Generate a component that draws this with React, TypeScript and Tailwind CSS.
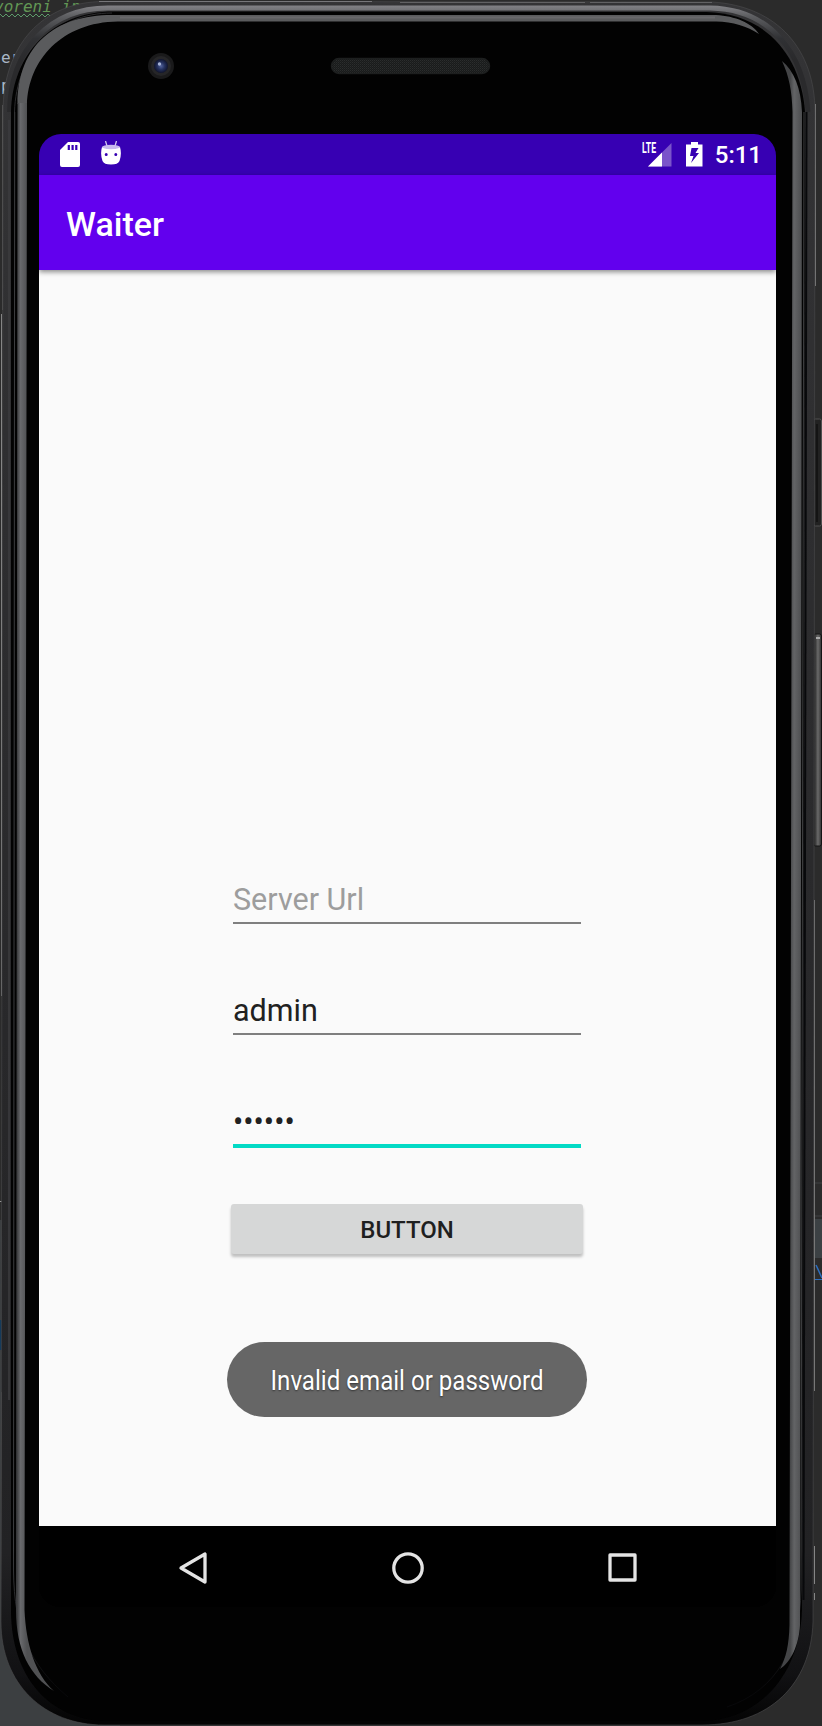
import React from "react";

const OUTER =
  "M3 112 C3 46 42 1.500 104 1.500 L712 2 C778 6 815 50 815 112 L813 1622 C811 1684 770 1725 702 1725 L104 1725 C44 1725 1 1684 1 1622 Z";

function EditorBackdrop() {
  return (
    <svg className="absolute inset-0" width="822" height="1726" viewBox="0 0 822 1726" fill="none" aria-hidden="true">
      <rect width="822" height="1726" fill="#2b2b2b" />
      <rect y="1220" width="120" height="506" fill="#3c3f41" />
      <rect y="1320" width="2" height="30" fill="#123a5c" />
      <rect x="814" y="1219" width="8" height="39" fill="#3c4144" />
      <path d="M814 1183H822M814 1216H822" stroke="#414345" />
      <path d="M0 1201.500H2" stroke="#999" />
      <path d="M2.500 105V310" stroke="#555" />
      <path d="M1.500 314V996M1.500 1392V1620" stroke="#858585" />
      <path d="M815.500 104V286" stroke="#7b7b7b" />
      <path d="M814.500 900V1391" stroke="#777" />
      <path d="M814.500 1546V1584M814.500 1593V1600" stroke="#858585" />
      <path d="M816 1265L822 1278" stroke="#2d6fc0" strokeWidth="1.500" />
      <path d="M815 1279.500H822" stroke="#2d6fc0" />
    </svg>
  );
}

function DeviceFrame() {
  return (
    <svg className="absolute inset-0" width="822" height="1726" viewBox="0 0 822 1726" fill="none" aria-hidden="true">
      <defs>
        <linearGradient id="silver" gradientUnits="userSpaceOnUse" x1="790" x2="802" y1="0" y2="0">
          <stop offset="0" stopColor="#444547" />
          <stop offset=".35" stopColor="#636466" />
          <stop offset="1" stopColor="#4c4d4f" />
        </linearGradient>
        <linearGradient id="leftRim" gradientUnits="userSpaceOnUse" x1="17" x2="27" y1="0" y2="0">
          <stop offset="0" stopColor="#3b3c3e" />
          <stop offset=".35" stopColor="#68696c" />
          <stop offset="1" stopColor="#505153" />
        </linearGradient>
        <linearGradient id="topRim" gradientUnits="userSpaceOnUse" x1="0" x2="0" y1="6" y2="60">
          <stop offset="0" stopColor="#808084" />
          <stop offset=".2" stopColor="#5c5d60" />
          <stop offset=".6" stopColor="#303134" />
          <stop offset="1" stopColor="#2a2a2c" />
        </linearGradient>
        <linearGradient id="body" gradientUnits="userSpaceOnUse" x1="0" x2="0" y1="0" y2="1726">
          <stop offset="0" stopColor="#343436" />
          <stop offset=".9" stopColor="#222224" />
          <stop offset=".97" stopColor="#111113" />
          <stop offset="1" stopColor="#030303" />
        </linearGradient>
        <linearGradient id="line" gradientUnits="userSpaceOnUse" x1="0" x2="0" y1="1550" y2="1690">
          <stop offset="0" stopColor="#3c3d3f" />
          <stop offset="1" stopColor="#08080a" />
        </linearGradient>
        <linearGradient id="key" x1="0" x2="1" y1="0" y2="0">
          <stop offset="0" stopColor="#151515" />
          <stop offset=".55" stopColor="#6a6a6a" />
          <stop offset="1" stopColor="#303030" />
        </linearGradient>
        <radialGradient id="lens">
          <stop offset="0" stopColor="#53639c" />
          <stop offset=".5" stopColor="#253260" />
          <stop offset="1" stopColor="#10142c" />
        </radialGradient>
        <pattern id="mesh" width="2" height="2" patternUnits="userSpaceOnUse">
          <rect width="2" height="2" fill="#191b1b" />
          <rect width="1" height="1" fill="#2b2d2d" />
          <rect x="1" y="1" width="1" height="1" fill="#222424" />
        </pattern>
      </defs>

      <rect x="813.500" y="419" width="8" height="107" rx="2" fill="#222" stroke="#505050" />
      <path d="M817 424V522" stroke="#141414" strokeWidth="2" />
      <rect x="813.500" y="634" width="8" height="212" rx="2" fill="url(#key)" stroke="#141414" />
      <path d="M816 638H820" stroke="#aaa" strokeWidth="2" />

      <path d={OUTER} fill="url(#body)" stroke="#4c4c4e" strokeWidth=".6" />
      <path d="M99 1.500H372" stroke="#77777a" />
      <path d="M400 2.500H585M590 2.500H712" stroke="#626264" />
      <path d="M9.500 112 C10 50 50 8 108 8 L710 8 C768 9 804 50 808 112" stroke="url(#topRim)" strokeWidth="5" />
      <path
        d="M11 112 C12 54 52 11.500 114 11.500 L706 12 C764 13 801 54 805 112 L802 1610 C800 1674 760 1720 702 1721 L104 1721 C50 1719 11 1678 11 1610 Z"
        fill="#020202"
      />
      <path d="M9 120V1400" stroke="#3c3c3f" strokeWidth="1.500" />
      <path d="M14.500 112 C16 56 54 13 112 13" stroke="#2c2c2e" />
      <path d="M14.700 112 L13.500 1570 C14 1630 30 1665 68 1697" stroke="url(#line)" />
      <path d="M804 112 L801 1590 C800 1645 778 1690 727 1707" stroke="url(#line)" />
      <path d="M806.500 112 L803.500 1600" stroke="#08090b" strokeWidth="2" />

      <path
        d="M17.500 104 C18 45 55 15 112 15 L716 15 C735 16 752 23 759 34 C747 26 733 22 716 21.500 L118 21.500 C62 22 28 60 27 105 Z"
        fill="#5a5b5d"
      />
      <path d="M17.500 103 L27 103 L24.500 1610 C26 1644 35 1674 54 1691 C30 1676 16 1650 16 1610 Z" fill="url(#leftRim)" />
      <path
        d="M782 61 C794 71 801 88 802 112 L800 1625 C799 1645 791 1662 780 1669 C786 1658 789 1645 789.500 1625 L792.500 112 C792 91 789 76 782 61 Z"
        fill="url(#silver)"
      />
      <path d="M120 17.500H715" stroke="#68686b" strokeWidth="2" />

      <rect x="331.500" y="58.500" width="158" height="15" rx="7.500" fill="url(#mesh)" stroke="#1d1f1f" strokeWidth="1.500" />
      <circle cx="161" cy="66" r="13" fill="#1a1a1b" />
      <circle cx="161" cy="66" r="10" fill="#262628" />
      <circle cx="161" cy="66" r="7" fill="url(#lens)" />
      <circle cx="159.500" cy="64" r="1.700" fill="#a6b3d6" />
    </svg>
  );
}

function SdCard() {
  return (
    <svg width="20" height="26" viewBox="0 0 20 26" fill="#fff">
      <path
        fillRule="evenodd"
        d="M8 0H18Q20 0 20 2V23Q20 25 18 25H2Q0 25 0 23V8ZM7.700 3V8H9.900V3ZM11.500 3V8H13.700V3ZM15.200 3V8H17.400V3Z"
      />
    </svg>
  );
}

function AndroidHead() {
  return (
    <svg width="20" height="24" viewBox="0 0 20 24" fill="#fff">
      <path d="M4.500 0L6 5M15.500 0L14 5" stroke="#d4c8ef" strokeWidth="1.300" />
      <path
        fillRule="evenodd"
        d="M1 6Q10 9 19 6Q21 13 18.500 20Q17 23.500 10 23.500Q3 23.500 1.500 20Q-1 13 1 6ZM5.200 12A1.500 1.500 0 1 0 5.200 15A1.500 1.500 0 1 0 5.200 12ZM14.800 12A1.500 1.500 0 1 0 14.800 15A1.500 1.500 0 1 0 14.800 12Z"
      />
      <ellipse cx="10" cy="6" rx="9" ry="2.200" fill="#c9b9ee" />
    </svg>
  );
}

function Signal() {
  return (
    <div className="relative h-[25px] w-[31px]">
      <svg className="absolute inset-0" width="31" height="25" viewBox="0 0 31 25">
        <path d="M30.500 1V24.500H7Z" fill="#7a54ca" />
        <path d="M21 10.500V24.500H7Z" fill="#fff" />
      </svg>
      <span className="absolute top-0 left-[1px] origin-left scale-x-[0.6] text-[14.500px] leading-[14px] font-bold text-white">LTE</span>
    </div>
  );
}

function Battery() {
  return (
    <svg width="17" height="25" viewBox="0 0 17 25" fill="#fff">
      <path fillRule="evenodd" d="M5 0H12V2.500H16.500V24.500H0V2.500H5ZM5.500 6L4 14H7.500L5 21L13 11H9.500L12.500 6Z" />
    </svg>
  );
}

function Field({ text, tone, focused = false }: { text: string; tone: string; focused?: boolean }) {
  return (
    <div className={`h-[111px] ${tone}`}>
      <div className="flex h-[42px] items-center pt-[8px] text-[30.500px] leading-[34px] whitespace-pre">{text}</div>
      <div className={focused ? "mt-[5px] h-[4px] bg-[#03dac5]" : "mt-[5px] h-[2px] bg-[#7f7f7f]"} />
    </div>
  );
}

export default function App() {
  return (
    <div className="relative h-[1726px] w-[822px] overflow-hidden bg-[#2b2b2b] font-['Roboto',sans-serif]">
      <div className="absolute inset-0 font-['DejaVu_Sans_Mono',monospace] text-[16px] leading-[22px] text-[#a9b7c6]">
        <EditorBackdrop />
        <div className="absolute -top-[4px] -left-[6px] whitespace-pre text-[#629755] italic">voreni in</div>
        <svg className="absolute top-[13px] left-0" width="51" height="5" viewBox="0 0 51 5" fill="none">
          <path d="M0 1L3 4L6 1L9 4L12 1L15 4L18 1L21 4L24 1L27 4L30 1L33 4L36 1L39 4L42 1L45 4L48 1L51 4" stroke="#5d9a6a" />
        </svg>
        <div className="absolute top-[47px] left-[1px]">er</div>
        <div className="absolute top-[75px] left-[1px]">p</div>
        <DeviceFrame />
      </div>

      <div className="relative flex h-full flex-col px-[39px] pt-[134px]">
        <main className="flex h-[1473px] w-[737px] flex-col overflow-hidden rounded-[22px] bg-black">
          <header className="flex h-[41px] shrink-0 items-center bg-[#3700b3] pr-[14px] pl-[21px] text-white">
            <SdCard />
            <div className="ml-[21px] -mt-[3px]">
              <AndroidHead />
            </div>
            <div className="ml-auto flex items-center">
              <Signal />
              <div className="ml-[14px]">
                <Battery />
              </div>
              <span className="ml-[12px] text-[24px] leading-[28px] font-medium">5:11</span>
            </div>
          </header>
          <div className="z-10 flex h-[95px] shrink-0 items-center bg-[#6200ee] pt-[3px] pl-[27px] shadow-[0_2px_5px_rgba(0,0,0,0.45)]">
            <h1 className="text-[34px] leading-[40px] font-medium text-white">Waiter</h1>
          </div>

          <section className="flex h-[1256px] shrink-0 flex-col items-center bg-[#fafafa] pt-[605px] pr-px">
            <div className="w-[348px]">
              <Field text="Server Url" tone="text-[#9d9d9d]" />
              <Field text="admin" tone="text-[#212121]" />
              <Field text="••••••" tone="text-[#212121]" focused />
            </div>
            <button className="-mt-[4px] flex h-[50px] w-[352px] shrink-0 items-center justify-center rounded-[3px] bg-[#d6d7d7] pt-[2px] text-[24px] font-medium text-[#1f1f1f] shadow-[0_3px_3px_rgba(0,0,0,0.24)]">
              BUTTON
            </button>
            <div className="mt-[88px] flex h-[75px] w-[360px] shrink-0 items-center justify-center rounded-full bg-[#666666] pt-[4px]">
              <span className="scale-x-[0.892] text-[27px] whitespace-nowrap text-white [text-shadow:0_1px_2px_rgba(0,0,0,0.5)]">Invalid email or password</span>
            </div>
          </section>

          <nav className="flex h-[81px] shrink-0 items-center justify-between bg-black pt-[2px] pr-[139px] pl-[139px]">
            <svg width="30" height="34" viewBox="0 0 30 34" fill="none" stroke="#e4e4e4" strokeWidth="3.300" strokeLinejoin="round">
              <path d="M3 17L27 3V31Z" />
            </svg>
            <svg width="32" height="32" viewBox="0 0 32 32" fill="none" stroke="#e4e4e4" strokeWidth="3.300">
              <circle cx="16" cy="16" r="14.200" />
            </svg>
            <svg width="29" height="29" viewBox="0 0 29 29" fill="none" stroke="#e4e4e4" strokeWidth="3.300" strokeLinejoin="round">
              <rect x="2" y="2" width="25" height="25" />
            </svg>
          </nav>
        </main>
      </div>
    </div>
  );
}
